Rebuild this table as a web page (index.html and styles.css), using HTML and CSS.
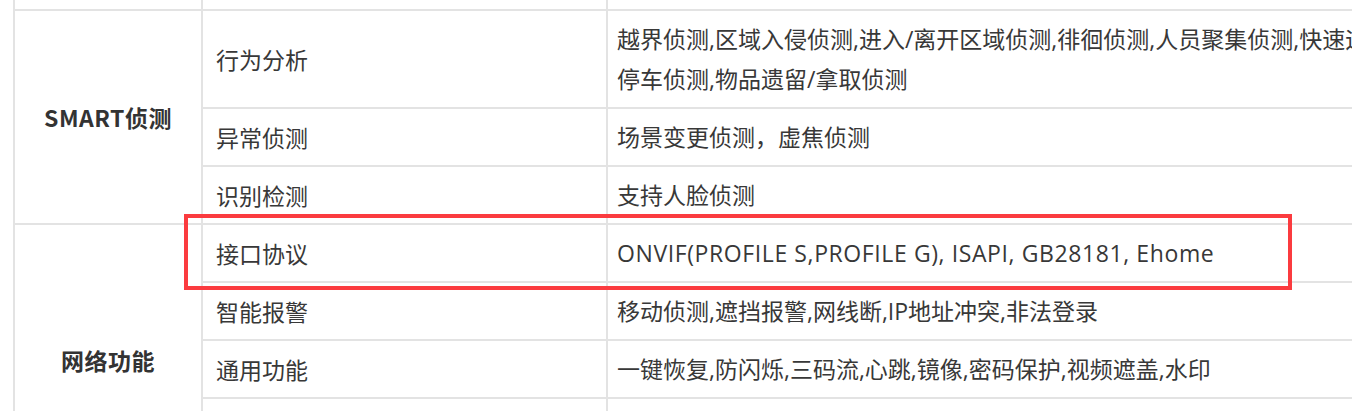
FILE: index.html
```html
<!DOCTYPE html>
<html lang="zh-CN">
<head>
<meta charset="utf-8">
<title>规格参数</title>
<link rel="stylesheet" href="styles.css">
</head>
<body>
<div class="page">
  <table class="spec">
    <colgroup>
      <col class="c-group">
      <col class="c-key">
      <col class="c-val">
    </colgroup>
    <tbody>
      <tr class="spacer">
        <td class="group"></td>
        <td class="key"></td>
        <td class="val"></td>
      </tr>
      <tr>
        <td class="group" rowspan="3">SMART侦测</td>
        <td class="key">行为分析</td>
        <td class="val">越界侦测,区域入侵侦测,进入/离开区域侦测,徘徊侦测,人员聚集侦测,快速运动侦测,<br>停车侦测,物品遗留/拿取侦测</td>
      </tr>
      <tr>
        <td class="key">异常侦测</td>
        <td class="val">场景变更侦测，虚焦侦测</td>
      </tr>
      <tr>
        <td class="key">识别检测</td>
        <td class="val">支持人脸侦测</td>
      </tr>
      <tr>
        <td class="group" rowspan="4">网络功能</td>
        <td class="key">接口协议</td>
        <td class="val latin">ONVIF(PROFILE S,PROFILE G), ISAPI, GB28181, Ehome</td>
      </tr>
      <tr>
        <td class="key">智能报警</td>
        <td class="val">移动侦测,遮挡报警,网线断,IP地址冲突,非法登录</td>
      </tr>
      <tr>
        <td class="key">通用功能</td>
        <td class="val">一键恢复,防闪烁,三码流,心跳,镜像,密码保护,视频遮盖,水印</td>
      </tr>
      <tr>
        <td class="key">网络协议</td>
        <td class="val">TCP/IP,ICMP,HTTP,HTTPS,FTP,DHCP,DNS,DDNS,RTP,RTSP,RTCP,NTP,UPnP,SMTP,<br>IGMP,802.1X,QoS,IPv6,Bonjour</td>
      </tr>
    </tbody>
  </table>
  <div class="highlight"></div>
</div>
</body>
</html>
```

FILE: styles.css
```css
html, body {
  margin: 0;
  padding: 0;
  background: #ffffff;
}

.page {
  position: relative;
  width: 1352px;
  height: 411px;
  overflow: hidden;
  background: #ffffff;
}

.spec {
  margin-left: 13px;
  border-collapse: separate;
  border-spacing: 0;
  table-layout: fixed;
  width: 1400px;
  border-left: 2px solid #e3e3e3;
  font-family: "Open Sans", "Noto Sans CJK SC", sans-serif;
  font-size: 23px;
  line-height: 40px;
  color: #383838;
}

.c-group { width: 188px; }
.c-key { width: 405px; }
.c-val { width: 807px; }

.spec td {
  border-right: 2px solid #e3e3e3;
  border-bottom: 2px solid #e3e3e3;
  padding: 8px 0 8px 0;
  vertical-align: middle;
  white-space: nowrap;
  overflow: hidden;
}

.spec tr.spacer td {
  height: 9px;
  padding: 0;
  line-height: 0;
}

.spec td.group {
  text-align: center;
  font-weight: 700;
  color: #333333;
  font-family: "Noto Sans CJK SC", sans-serif;
  letter-spacing: 0.5px;
}

.spec td.key {
  padding-left: 13px;
  font-family: "Noto Sans CJK SC", sans-serif;
}

.spec td.val {
  padding-left: 9px;
}

.spec td.latin {
  letter-spacing: 0.6px;
}

.highlight {
  position: absolute;
  left: 184px;
  top: 214px;
  width: 1100px;
  height: 68px;
  border: 4px solid #fb3b3f;
}
```
